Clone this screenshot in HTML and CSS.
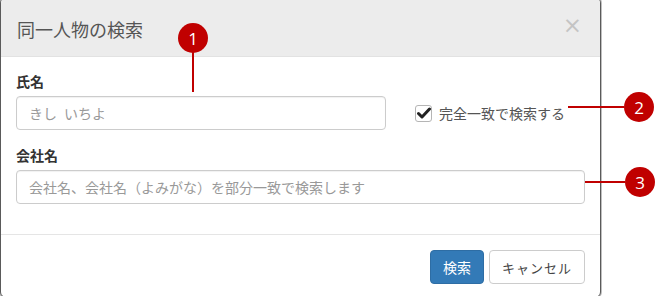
FILE: index.html
```html
<!DOCTYPE html>
<html lang="ja">
<head>
  <meta charset="UTF-8">
  <title>同一人物の検索</title>
  <link rel="stylesheet" href="styles.css">
</head>
<body>
  <div class="page">
    <!-- Modal dialog -->
    <div class="modal">
      <div class="modal-header">
        <h4 class="modal-title">同一人物の検索</h4>
        <span class="close">&times;</span>
      </div>

      <div class="modal-body">
        <div class="form-group">
          <label class="field-label">氏名</label>
          <div class="name-row">
            <input class="form-control name-input" type="text" placeholder="きし&#8194;いちよ">
            <label class="check">
              <span class="check-box">
                <svg width="14" height="12" viewBox="0 0 14 12"><path d="M1.5 6.5 L5 10 L12.5 2" fill="none" stroke="#222" stroke-width="3" stroke-linecap="round" stroke-linejoin="round"/></svg>
              </span>
              完全一致で検索する
            </label>
          </div>
        </div>

        <div class="form-group">
          <label class="field-label">会社名</label>
          <input class="form-control" type="text" placeholder="会社名、会社名（よみがな）を部分一致で検索します">
        </div>
      </div>

      <div class="modal-footer">
        <button class="btn btn-primary">検索</button>
        <button class="btn btn-default">キャンセル</button>
      </div>
    </div>

    <!-- Callouts -->
    <div class="callout callout-1"><span class="badge">1</span><span class="stem"></span></div>
    <div class="callout callout-2"><span class="lead"></span><span class="badge">2</span></div>
    <div class="callout callout-3"><span class="lead"></span><span class="badge">3</span></div>
  </div>
</body>
</html>
```

FILE: styles.css
```css
* {
  margin: 0;
  padding: 0;
  box-sizing: border-box;
}

body {
  font-family: "Noto Sans CJK JP", "Noto Sans", sans-serif;
  font-size: 14px;
  color: #333;
  background: #fff;
  overflow: hidden;
}

.page {
  position: relative;
  width: 655px;
  height: 299px;
}

/* Modal */
.modal {
  width: 601px;
  margin-top: -3px;
  background: #fff;
  border: 1px solid #5a5a5a;
  border-radius: 6px;
  box-shadow: 0 0 0 1px rgba(0, 0, 0, 0.25);
  overflow: hidden;
}

.modal-header {
  display: flex;
  align-items: center;
  justify-content: space-between;
  height: 59px;
  padding: 3px 15px 0 16px;
  background: #ececec;
  border-bottom: 1px solid #e2e2e2;
}

.modal-title {
  font-size: 18px;
  font-weight: normal;
  color: #555;
}

.close {
  font-family: "DejaVu Sans", sans-serif;
  font-size: 23px;
  line-height: 1;
  color: #c4c4c4;
  margin-right: 3px;
  margin-top: -7px;
}

.modal-body {
  padding: 14px 15px 15px;
}

.form-group {
  margin-bottom: 15px;
}

.field-label {
  display: block;
  font-weight: bold;
  line-height: 20px;
  margin-bottom: 5px;
}

.form-control {
  display: block;
  width: 100%;
  height: 34px;
  padding: 6px 12px;
  font-family: inherit;
  font-size: 14px;
  color: #555;
  border: 1px solid #ccc;
  border-radius: 4px;
  box-shadow: inset 0 1px 1px rgba(0, 0, 0, 0.06);
}

.form-control::placeholder {
  color: #999;
}

.name-row {
  display: flex;
  align-items: center;
}

.name-input {
  width: 370px;
}

.check {
  display: flex;
  align-items: center;
  gap: 7px;
  margin-left: 29px;
  color: #555;
}

.check-box {
  display: flex;
  align-items: center;
  justify-content: center;
  width: 17px;
  height: 17px;
  border: 1px solid #b5b5b5;
  border-radius: 3px;
  background: #fff;
}

/* Footer */
.modal-footer {
  display: flex;
  justify-content: flex-end;
  gap: 5px;
  padding: 15px 15px 13px;
  border-top: 1px solid #e5e5e5;
}

.btn {
  height: 34px;
  padding: 0 12px;
  font-family: inherit;
  font-size: 14px;
  border-radius: 4px;
  border: 1px solid transparent;
}

.btn-primary {
  width: 54px;
  background: #337ab7;
  border-color: #2e6da4;
  color: #fff;
}

.btn-default {
  width: 96px;
  background: #fff;
  border-color: #ccc;
  color: #444;
  font-size: 13px;
  letter-spacing: 1px;
}

/* Callouts */
.callout {
  position: absolute;
  display: flex;
  align-items: center;
}

.badge {
  display: flex;
  align-items: center;
  justify-content: center;
  width: 30px;
  height: 30px;
  border-radius: 50%;
  background: #c00000;
  color: #fff;
  font-family: "Open Sans", sans-serif;
  font-size: 17px;
}

.callout-1 {
  left: 178px;
  top: 26px;
  flex-direction: column;
}

.stem {
  width: 2px;
  height: 40px;
  background: #c00000;
  margin-top: -1px;
}

.callout-2 {
  left: 568px;
  top: 95px;
}

.callout-3 {
  left: 585px;
  top: 170px;
}

.lead {
  height: 2px;
  background: #c00000;
}

.callout-2 .lead {
  width: 56px;
}

.callout-3 .lead {
  width: 40px;
}
```
